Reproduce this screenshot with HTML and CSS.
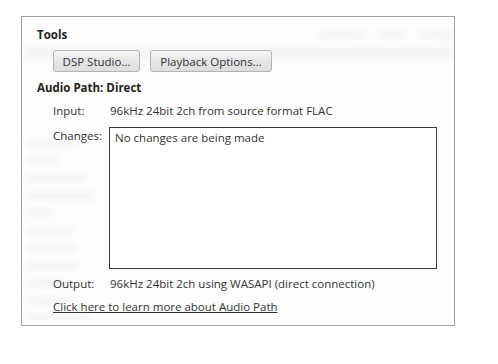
FILE: index.html
```html
<!DOCTYPE html>
<html lang="en">
<head>
    <meta charset="UTF-8">
    <title>Audio Path</title>
    <link rel="stylesheet" href="styles.css">
</head>
<body>
<div class="panel">
    <!-- blurred window content showing through -->
    <div class="ghost">
        <div class="ghost_band"></div>
        <div class="ghost_top">
            <span style="width:46px"></span>
            <span style="width:30px"></span>
            <span style="width:34px"></span>
        </div>
        <div class="ghost_list">
            <span style="width:50px"></span>
            <span style="width:30px"></span>
            <span style="width:58px"></span>
            <span style="width:66px"></span>
            <span style="width:24px"></span>
            <span style="width:44px"></span>
            <span style="width:48px"></span>
            <span style="width:50px"></span>
            <span style="width:36px"></span>
            <span style="width:44px"></span>
            <span style="width:60px"></span>
        </div>
    </div>

    <div class="panel_body">
        <div class="section_title">Tools</div>
        <div class="tool_buttons">
            <button class="btn btn_dsp">DSP Studio...</button>
            <button class="btn btn_play">Playback Options...</button>
        </div>

        <div class="section_title path_title">Audio Path: Direct</div>
        <div class="path_row row_input">
            <div class="path_label">Input:</div>
            <div class="path_value">96kHz 24bit 2ch from source format FLAC</div>
        </div>
        <div class="path_row row_changes">
            <div class="path_label label_right">Changes:</div>
            <div class="changes_box">No changes are being made</div>
        </div>
        <div class="path_row row_output">
            <div class="path_label">Output:</div>
            <div class="path_value">96kHz 24bit 2ch using WASAPI (direct connection)</div>
        </div>
        <a class="learn_link" href="#">Click here to learn more about Audio Path</a>
    </div>
</div>
</body>
</html>
```

FILE: styles.css
```css
html, body {
    margin: 0;
    padding: 0;
    background: #ffffff;
}

body {
    font-family: "Open Sans", "Noto Sans", sans-serif;
    font-size: 11.5px;
    color: #333333;
}

.panel {
    position: relative;
    box-sizing: border-box;
    width: 434px;
    height: 310px;
    margin: 16px 0 0 21px;
    border: 1px solid #a3a3a3;
    background: #fdfdfd;
    overflow: hidden;
}

.ghost {
    position: absolute;
    left: 0;
    top: 0;
    right: 0;
    bottom: 0;
}

.ghost_band {
    position: absolute;
    left: 0;
    right: 0;
    top: 32px;
    height: 8px;
    background: #f0f0f0;
    filter: blur(5px);
}

.ghost_top {
    position: absolute;
    top: 15px;
    left: 296px;
    display: flex;
    gap: 13px;
}

.ghost_top span,
.ghost_list span {
    display: block;
    height: 6px;
    background: #f2f2f2;
    filter: blur(3px);
}

.ghost_list {
    position: absolute;
    left: 6px;
    top: 123px;
    display: flex;
    flex-direction: column;
    gap: 11.5px;
}

.panel_body {
    position: relative;
    padding: 10px 0 0 15px;
    line-height: 16px;
}

.section_title {
    font-weight: bold;
    color: #222222;
    font-size: 11.5px;
}

.tool_buttons {
    display: flex;
    gap: 10px;
    margin: 7px 0 0 16px;
}

.btn {
    box-sizing: border-box;
    height: 22px;
    padding: 0;
    border: 1px solid #b4b4b4;
    border-radius: 3px;
    background: linear-gradient(#f6f6f6, #e6e6e6 50%, #dddddd);
    font-family: inherit;
    font-size: 11.5px;
    color: #333333;
}

.btn_dsp {
    width: 87px;
}

.btn_play {
    width: 122px;
}

.path_title {
    margin-top: 8px;
}

.path_row {
    display: flex;
    margin-left: 16px;
}

.row_input {
    margin-top: 7px;
}

.row_changes {
    margin-top: 8px;
}

.row_output {
    margin-top: 7px;
}

.path_label {
    width: 57px;
    flex: none;
}

.label_right {
    box-sizing: border-box;
    width: 56px;
    padding: 1px 7px 0 0;
    text-align: right;
}

.changes_box {
    box-sizing: border-box;
    width: 328px;
    height: 142px;
    border: 1px solid #3c3c3c;
    background: #ffffff;
    padding: 2px 5px;
}

.learn_link {
    display: inline-block;
    margin: 7px 0 0 16px;
    color: #333333;
    text-decoration: underline;
}
```
